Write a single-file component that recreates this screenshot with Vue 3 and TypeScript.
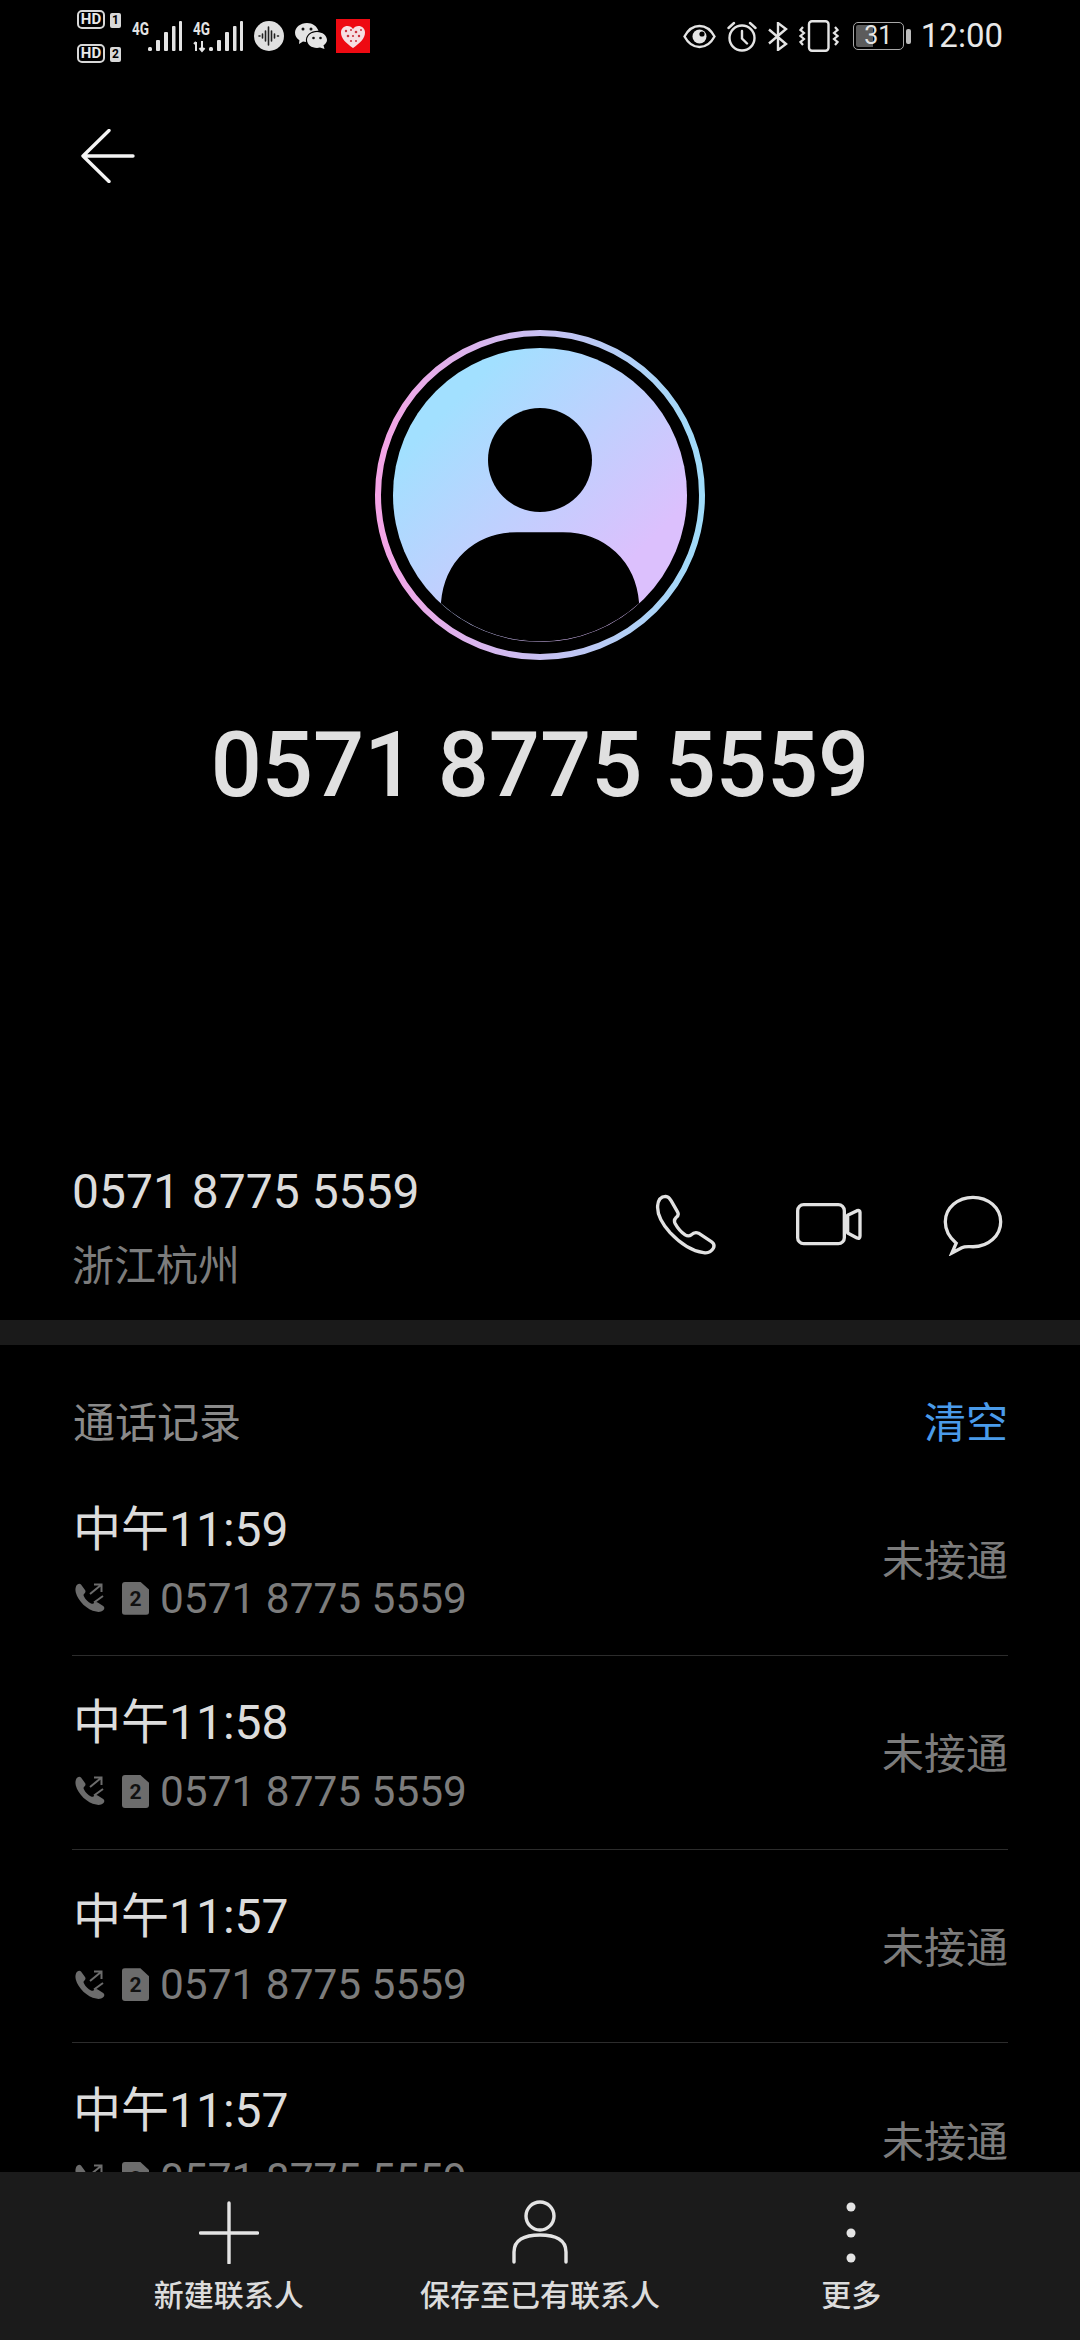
<script setup lang="ts">
const phone = '0571 8775 5559';

const calls = [
  { time: '中午11:59' },
  { time: '中午11:58' },
  { time: '中午11:57' },
  { time: '中午11:57' },
];
</script>

<template>
  <div class="page">
    <div class="status-bar">
      <div class="status-left">
        <div class="hd-col">
          <div class="hd-row"><span class="hd">HD</span><span class="sim-no">1</span></div>
          <div class="hd-row"><span class="hd">HD</span><span class="sim-no">2</span></div>
        </div>
        <svg class="signal" width="50" height="30" viewBox="0 0 50 30">
          <text x="0" y="14" class="net" textLength="17" lengthAdjust="spacingAndGlyphs">4G</text>
          <rect x="16" y="26" width="4" height="4" rx="1.5" />
          <rect x="24" y="19" width="4" height="11" rx="1" />
          <rect x="32" y="11" width="4" height="19" rx="1" />
          <rect x="40" y="5" width="3.5" height="25" rx="1" />
          <rect x="47" y="0" width="3" height="30" rx="1" />
        </svg>
        <svg class="signal" width="50" height="30" viewBox="0 0 50 30">
          <text x="0" y="14" class="net" textLength="17" lengthAdjust="spacingAndGlyphs">4G</text>
          <path d="M3 21v9M1 23l2-2M9 20v10M6.500 27l2.500 3 2.500-3" stroke="#e4e4e4" stroke-width="2" fill="none" />
          <rect x="16" y="26" width="4" height="4" rx="1.5" />
          <rect x="24" y="19" width="4" height="11" rx="1" />
          <rect x="32" y="11" width="4" height="19" rx="1" />
          <rect x="40" y="5" width="3.500" height="25" rx="1" />
          <rect x="47" y="0" width="3" height="30" rx="1" />
        </svg>
        <svg width="30" height="30" viewBox="0 0 30 30">
          <circle cx="15" cy="15" r="15" fill="#e0e0e0" />
          <path d="M5 15h1M8.500 13v4M11.500 10v10M14.500 6v18M17.500 10v10M20.500 13v4M23.500 15h1" stroke="#222" stroke-width="1.600" stroke-linecap="round" />
        </svg>
        <svg class="wechat" width="32" height="26" viewBox="0 0 32 26">
          <path d="M12 0C5.400 0 0 4.300 0 9.800c0 3.100 1.700 5.700 4.400 7.500L4 21l4-2.400c1 .2 2 .4 3 .4C10 12 16 7.500 23.500 7.800 22 3.300 17.500 0 12 0z" fill="#e4e4e4" />
          <path d="M22 9c-5.500 0-10 3.600-10 8s4.500 8 10 8c1 0 2-.1 3-.4L29.500 26l-1-3.700c2.200-1.400 3.500-3.400 3.500-5.300 0-4.400-4.500-8-10-8z" fill="#e4e4e4" />
          <circle cx="8" cy="6" r="1.500" fill="#111" />
          <circle cx="16" cy="6" r="1.500" fill="#111" />
          <circle cx="18.500" cy="15" r="1.300" fill="#111" />
          <circle cx="25.500" cy="15" r="1.300" fill="#111" />
        </svg>
        <svg class="app-red" width="34" height="34" viewBox="0 0 34 34">
          <rect width="34" height="34" fill="#ee0a12" />
          <path d="M17 29C10 24 5 19.500 5 13.500 5 9.500 8 7 11.500 7c2.300 0 4.300 1.200 5.500 3 1.200-1.800 3.200-3 5.500-3C26 7 29 9.500 29 13.500 29 19.500 24 24 17 29z" fill="#f6dfe2" />
          <g fill="#c9333f">
            <circle cx="10" cy="12" r="1.200" />
            <circle cx="15" cy="11" r="1" />
            <circle cx="20" cy="13" r="1.300" />
            <circle cx="25" cy="11" r="1" />
            <circle cx="12" cy="17" r="1.300" />
            <circle cx="17" cy="17" r="1.100" />
            <circle cx="23" cy="17" r="1.200" />
            <circle cx="15" cy="22" r="1.100" />
            <circle cx="20" cy="22" r="1" />
          </g>
        </svg>
      </div>

      <div class="status-right">
        <svg width="33" height="25" viewBox="0 0 33 25" fill="none" stroke="#e4e4e4" stroke-width="2.400">
          <path d="M1.500 12.500C5 6 10 2 16.500 2S28 6 31.500 12.500C28 19 23 23 16.500 23S5 19 1.500 12.500z" />
          <circle cx="16.500" cy="12.500" r="7" fill="#e4e4e4" stroke="none" />
          <circle cx="19" cy="10" r="2.600" fill="#000" stroke="none" />
        </svg>
        <svg width="30" height="31" viewBox="0 0 30 31" fill="none" stroke="#e4e4e4" stroke-width="2.400" stroke-linecap="round">
          <circle cx="15" cy="17" r="12.500" />
          <path d="M15 10v7.500l5 5M1.500 7L7 2M28.500 7L23 2" />
        </svg>
        <svg width="20" height="29" viewBox="0 0 20 29" fill="none" stroke="#e4e4e4" stroke-width="2.400">
          <path d="M1 7.500l17 14.500-8 6V1l8 6L1 21.500" />
        </svg>
        <svg width="40" height="32" viewBox="0 0 40 32" fill="none" stroke="#e4e4e4" stroke-width="2.200">
          <rect x="10" y="1.200" width="19.500" height="29.600" rx="3" stroke-width="2.400" />
          <path d="M4 7l-2.500 3L5 13l-3.500 3L5 19l-3.500 3L4 25M36 7l2.500 3L35 13l3.500 3L35 19l3.500 3L36 25" />
        </svg>
        <div class="battery">
          <div class="battery-body">
            <span class="battery-fill"></span>
            <span class="battery-text">31</span>
          </div>
          <span class="battery-nub"></span>
        </div>
        <span class="clock">12:00</span>
      </div>
    </div>

    <div class="nav">
      <svg width="54" height="54" viewBox="0 0 54 54" fill="none" stroke="#f4f4f4" stroke-width="3.400" stroke-linecap="round" stroke-linejoin="round">
        <path d="M52 27H2M28 1.500L2 27l26 25.500" />
      </svg>
    </div>

    <svg class="avatar" width="330" height="330" viewBox="0 0 330 330">
      <defs>
        <linearGradient id="ring" x1="0" y1="0.500" x2="1" y2="0.500">
          <stop offset="0" stop-color="#f4a4e6" />
          <stop offset="0.500" stop-color="#c8c0f2" />
          <stop offset="1" stop-color="#a0dcfa" />
        </linearGradient>
        <linearGradient id="disc" x1="0.120" y1="0.120" x2="0.880" y2="0.880">
          <stop offset="0.100" stop-color="#a2e0ff" />
          <stop offset="0.850" stop-color="#dcc0fd" />
        </linearGradient>
      </defs>
      <circle cx="165" cy="165" r="162" fill="none" stroke="url(#ring)" stroke-width="6" />
      <circle cx="165" cy="165" r="147" fill="url(#disc)" />
      <circle cx="165" cy="130" r="52" fill="#000" />
      <path d="M66.700 273C70 232 100 203 142 203H188C230 203 260 232 263.300 273A147 147 0 0 1 66.700 273Z" fill="#000" stroke="#000" stroke-width="1.600" />
    </svg>

    <div class="title">{{ phone }}</div>

    <div class="contact">
      <div>
        <div class="contact-number">{{ phone }}</div>
        <div class="contact-region">浙江杭州</div>
      </div>
      <div class="contact-actions">
        <svg class="icon-phone" width="62" height="62" viewBox="100 70 185 185" fill="none" stroke="#e2e2e2" stroke-width="10" stroke-linejoin="round">
          <path d="M108 105Q110 78 132 77Q142 78 148 90L168 125Q172 133 163 140Q155 148 160 158Q172 180 190 192Q200 198 208 192Q218 182 230 187L268 212Q280 220 274 232Q265 248 245 245Q195 238 145 185Q105 140 108 105Z" />
        </svg>
        <svg class="icon-video" width="66" height="43" viewBox="525 98 198 129" fill="none" stroke="#e2e2e2" stroke-width="10" stroke-linejoin="round">
          <rect x="530" y="103" width="140" height="117" rx="18" />
          <path d="M680 135L708 121Q717 118 717 126V197Q717 206 708 203L680 188Z" />
        </svg>
        <svg class="icon-chat" width="60" height="62" viewBox="965 70 182 184" fill="none" stroke="#e2e2e2" stroke-width="10">
          <path d="M1005 217C985 200 972 178 972 152C972 110 1010 78 1056 78C1102 78 1140 110 1140 152C1140 195 1102 228 1056 228C1042 228 1032 226 1022 231L992 247Z" />
        </svg>
      </div>
    </div>

    <div class="band"></div>

    <div class="log-head">
      <span class="log-title">通话记录</span>
      <span class="log-clear">清空</span>
    </div>

    <div class="log-list">
      <div v-for="(call, i) in calls" :key="i" class="log-row">
        <div class="log-main">
          <div class="log-time">{{ call.time }}</div>
          <div class="log-sub">
            <svg width="30" height="30" viewBox="0 0 30 30" fill="#6c6c6c">
              <path d="M1 3.500C2 1 4.500 0 6 1.500L10 7c1 1.500.5 2.500-1 4-.7.7-.5 1.500 0 2.500 1.500 3 4 5.500 7 7 1 .5 2 .5 2.700-.2 1.300-1.300 2.500-1.800 4-.8l5.500 3.500c1.500 1 1.500 3 0 4.300-2 1.700-4.500 2-7 1.300C12 27 3 18 .8 9.500.3 7 .3 5.500 1 3.500z" />
              <path d="M15 11L26 2M19 1.500h7.500V9M28 13l-9 6.500" fill="none" stroke="#6c6c6c" stroke-width="2" />
            </svg>
            <span class="sim">2</span>
            <span class="log-number">{{ phone }}</span>
          </div>
        </div>
        <span class="log-state">未接通</span>
      </div>
    </div>

    <div class="toolbar">
      <div class="tool">
        <svg width="60" height="64" viewBox="0 0 60 64" stroke="#e4e4e4" stroke-width="3.400" stroke-linecap="round">
          <path d="M30 3v60M1.500 33h57" />
        </svg>
        <span>新建联系人</span>
      </div>
      <div class="tool">
        <svg width="56" height="64" viewBox="0 0 56 64" fill="none" stroke="#e4e4e4" stroke-width="3.400" stroke-linecap="round">
          <ellipse cx="28" cy="16" rx="14" ry="14" />
          <path d="M2 62V52C2 40 12 35 28 35S54 40 54 52V62" />
        </svg>
        <span>保存至已有联系人</span>
      </div>
      <div class="tool">
        <svg width="10" height="64" viewBox="0 0 10 64" fill="#e4e4e4">
          <circle cx="5" cy="7" r="4.500" />
          <circle cx="5" cy="33" r="4.500" />
          <circle cx="5" cy="58" r="4.500" />
        </svg>
        <span>更多</span>
      </div>
    </div>
  </div>
</template>

<style scoped>
.page {
  width: 1080px;
  height: 2340px;
  background: #000;
  color: #e4e4e4;
  font-family: Roboto, "Noto Sans CJK SC", sans-serif;
  display: flex;
  flex-direction: column;
  overflow: hidden;
}

.status-bar {
  height: 72px;
  flex: none;
  display: flex;
  justify-content: space-between;
  align-items: center;
  padding: 0 77px;
}

.status-left,
.status-right {
  display: flex;
  align-items: center;
  gap: 11px;
}

.hd-col {
  display: flex;
  flex-direction: column;
  gap: 15px;
}

.hd-row {
  display: flex;
  align-items: center;
  gap: 5px;
  height: 19px;
}

.hd {
  width: 28px;
  height: 19px;
  box-sizing: border-box;
  border: 2px solid #d8d8d8;
  border-radius: 5px;
  font-size: 15px;
  font-weight: 700;
  line-height: 15px;
  text-align: center;
  color: #e8e8e8;
}

.sim-no {
  width: 11px;
  height: 15px;
  margin-top: 3px;
  background: #d8d8d8;
  border-radius: 2px;
  color: #000;
  font-size: 12px;
  font-weight: 700;
  line-height: 15px;
  text-align: center;
}

.signal {
  fill: #e4e4e4;
  overflow: visible;
}

.net {
  font-size: 18px;
  font-weight: 700;
  font-family: Roboto, sans-serif;
}

.wechat {
  margin-right: -2px;
}

.battery {
  display: flex;
  align-items: center;
  gap: 2px;
  margin-left: 3px;
}

.battery-body {
  position: relative;
  width: 51px;
  height: 28px;
  box-sizing: border-box;
  border: 1.5px solid #a8a8a8;
  border-radius: 5px;
  text-align: center;
  overflow: hidden;
}

.battery-fill {
  position: absolute;
  left: 2px;
  top: 2px;
  bottom: 2px;
  width: 17px;
  background: #5c5c5c;
  border-radius: 2px 0 0 2px;
}

.battery-text {
  position: relative;
  font-size: 25px;
  line-height: 25px;
  color: #e4e4e4;
  display: block;
}

.battery-nub {
  width: 5px;
  height: 15px;
  background: #bcbcbc;
  border-radius: 2px;
}

.clock {
  font-size: 33px;
  line-height: 40px;
  margin-left: -1px;
  color: #e8e8e8;
}

.nav {
  flex: none;
  display: flex;
  padding: 57px 0 0 81px;
}

.avatar {
  flex: none;
  display: block;
  margin: 147px auto 0;
}

.title {
  flex: none;
  margin-top: 56px;
  height: 100px;
  line-height: 100px;
  text-align: center;
  font-size: 90px;
  font-weight: 500;
  color: #e0e0e0;
}

.contact {
  flex: none;
  margin-top: 346px;
  padding: 0 77px 0 72px;
  display: flex;
  justify-content: space-between;
  align-items: center;
}

.contact-number {
  font-size: 48px;
  line-height: 60px;
  color: #dcdcdc;
}

.contact-region {
  margin-top: 15px;
  font-size: 42px;
  line-height: 60px;
  color: #7c7c7c;
}

.contact-actions {
  display: flex;
  align-items: center;
  gap: 79px;
  margin-top: -10px;
}

.icon-chat {
  margin-left: 2px;
}

.band {
  flex: none;
  height: 25px;
  margin-top: 23px;
  background: #1a1a1a;
}

.log-head {
  flex: none;
  margin-top: 44px;
  padding: 0 72px 0 73px;
  display: flex;
  justify-content: space-between;
  align-items: center;
  height: 60px;
  font-size: 42px;
}

.log-title {
  color: #8a8a8a;
}

.log-clear {
  color: #4a9bea;
}

.log-list {
  flex: 1;
  min-height: 0;
  margin-top: 14px;
  padding: 0 72px;
  overflow: hidden;
}

.log-row {
  height: 193.300px;
  box-sizing: border-box;
  border-bottom: 1px solid #2c2c2c;
  display: flex;
  justify-content: space-between;
  align-items: center;
}

.log-row:last-child {
  border-bottom: none;
}

.log-main {
  padding-top: 5px;
}

.log-time {
  padding-left: 1px;
  font-size: 48px;
  line-height: 60px;
  color: #dcdcdc;
}

.log-sub {
  margin-top: 13px;
  height: 50px;
  padding-left: 3px;
  display: flex;
  align-items: center;
}

.sim {
  width: 27px;
  height: 33px;
  margin-left: 17px;
  background: #6c6c6c;
  clip-path: polygon(0 0, 68% 0, 100% 24%, 100% 100%, 0 100%);
  border-radius: 3px;
  color: #111;
  font-size: 21px;
  font-weight: 700;
  line-height: 35px;
  text-align: center;
}

.log-number {
  margin-left: 11px;
  font-size: 42.400px;
  color: #7c7c7c;
}

.log-state {
  margin-bottom: 3px;
  font-size: 42px;
  color: #7c7c7c;
}

.toolbar {
  flex: none;
  height: 168px;
  background: #1b1b1b;
  padding: 0 73px;
  display: grid;
  grid-template-columns: repeat(3, 1fr);
}

.tool {
  display: flex;
  flex-direction: column;
  align-items: center;
  padding-top: 28px;
  font-size: 30px;
  font-weight: 500;
  color: #dcdcdc;
}

.tool svg {
  flex: none;
}

.tool span {
  margin-top: 12px;
  line-height: 40px;
  white-space: nowrap;
}
</style>
